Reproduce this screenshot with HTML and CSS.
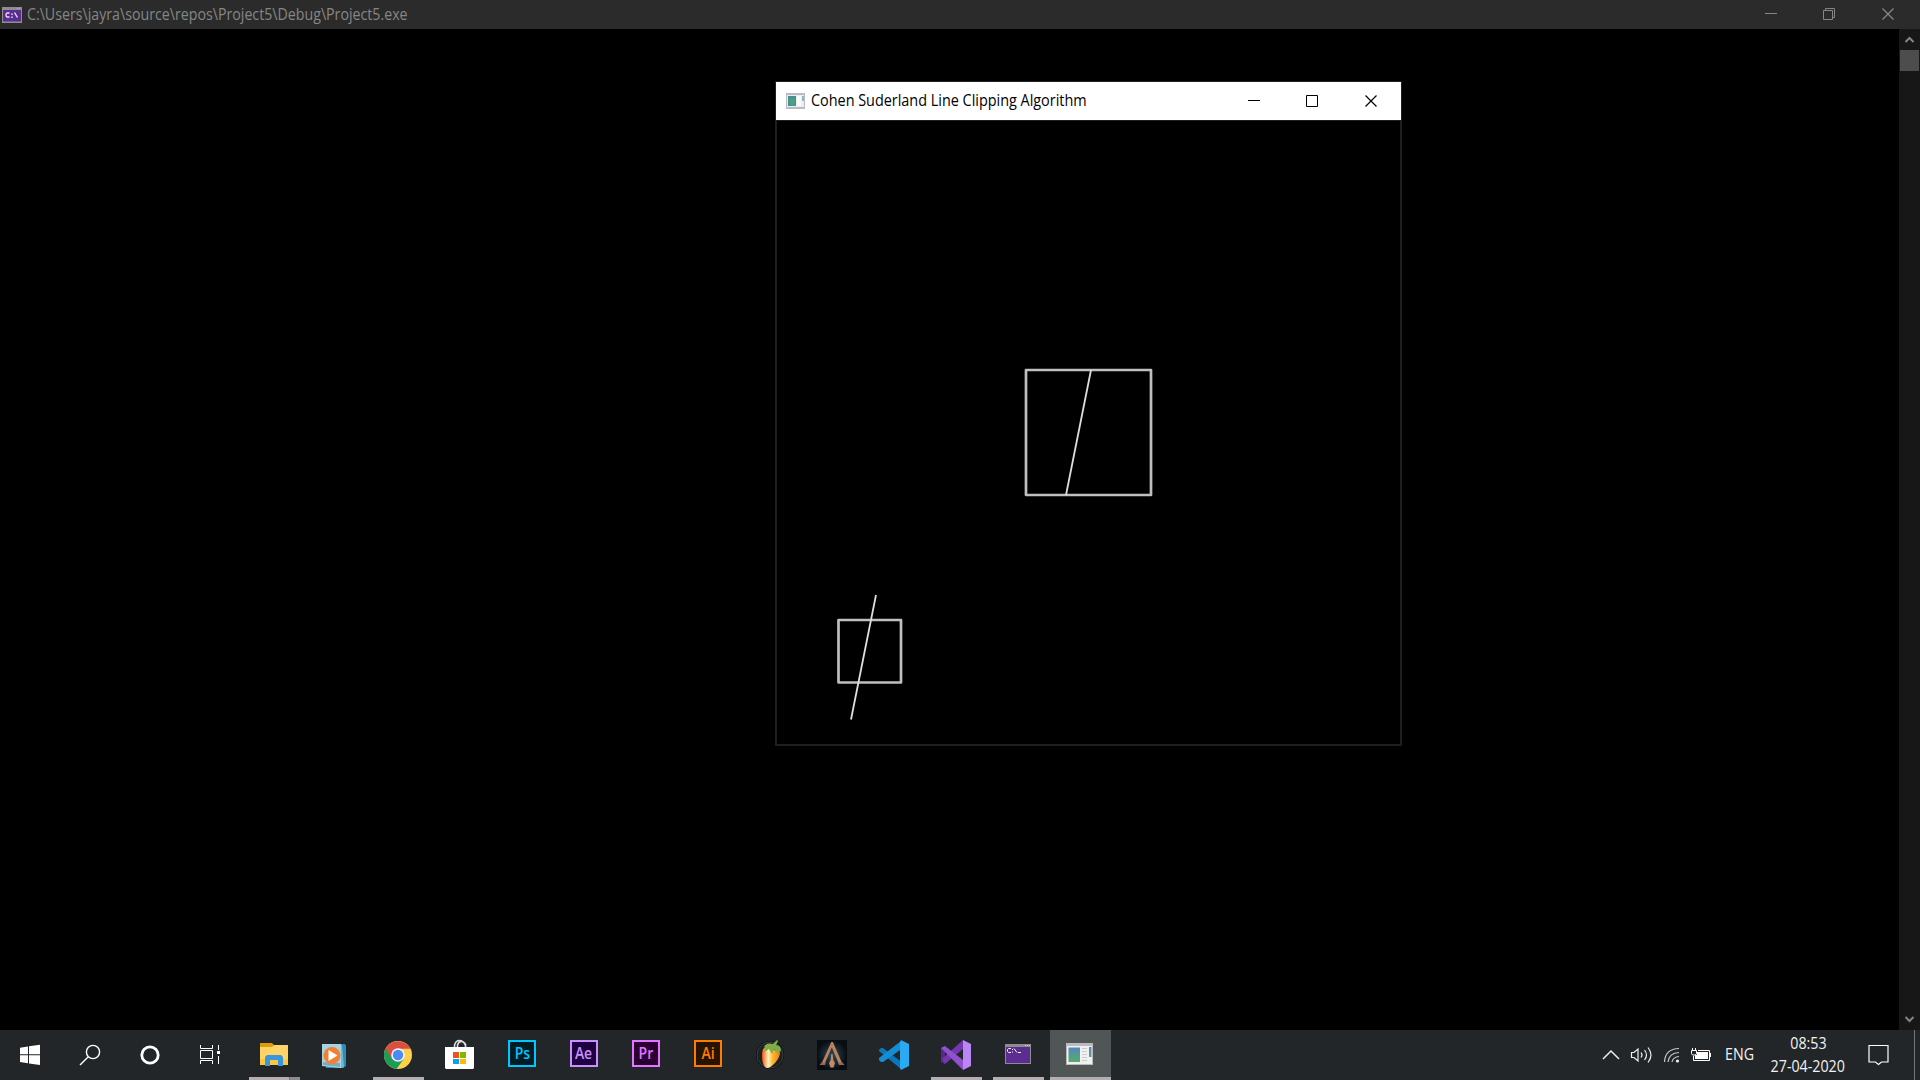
FILE: index.html
```html
<!DOCTYPE html>
<html lang="en">
<head>
<meta charset="utf-8">
<title>Desktop</title>
<link rel="stylesheet" href="styles.css">
</head>
<body>
<div class="desktop">
  <header class="console-bar">
    <svg class="console-icon" width="20" height="16" viewBox="0 0 20 16"><path fill="#8e8e92" d="M0 0h20v16H0z"/><path fill="#b5b5b9" d="M15 1h1v1h-1zM17 1h1v1h-1z"/><path fill="#5b2d91" d="M1 3h18v11.500H1z"/><path fill="none" stroke="#e8dff2" stroke-width="1.400" d="M7.500 6H5.300Q4 6 4 8t1.300 2h2.200M10 6.500v1.500M10 9.500v1.500M12.500 5.500l3 5"/></svg>
    <span class="console-title">C:\Users\jayra\source\repos\Project5\Debug\Project5.exe</span>
    <svg class="console-controls" width="149" height="29" viewBox="0 0 149 29"><g fill="none" stroke="#868686"><path d="M0 13.500h12"/><path d="M58.500 10.500h9v9h-9zM60.500 10.500v-2h9v9h-2"/><path stroke-width="1.300" d="M117.500 8.500l11 11M128.500 8.500l-11 11"/></g></svg>
  </header>
  <div class="console">
    <main class="console-area">
      <section class="window">
        <div class="window-bar">
          <svg width="19" height="16" viewBox="0 0 19 16"><path fill="#b9bcc4" d="M0 0h19v16H0z"/><path fill="#eceef1" d="M1 2h17v12H1z"/><path fill="#4c8f92" d="M2 3h8v10H2z"/><path fill="#4ba27c" d="M4 6h5v6H4z"/><path fill="#fafafa" d="M11 3h4v10h-4z"/><path fill="#8db8bd" d="M16 3h2v5h-2z"/></svg>
          <span class="window-title">Cohen Suderland Line Clipping Algorithm</span>
          <svg class="window-controls" width="153" height="38" viewBox="0 0 153 38"><g fill="none" stroke="#000"><path d="M0 18.500h12M58.500 13.500h11v11h-11z"/><path stroke-width="1.200" d="M117.500 13.500l11 11M128.500 13.500l-11 11"/></g></svg>
        </div>
        <svg class="canvas" width="625" height="625" viewBox="0 0 625 625"><path fill="none" stroke="#1e1e1e" d="M.5 0v624.500h624V0M0 .5h625"/><g fill="none" stroke="#bfbfbf" stroke-width="2.700" stroke-linejoin="round"><path d="M250 250h125v125H250zM62.500 500H125v62.500H62.500z"/><path stroke="#dedede" stroke-width="1.800" d="M315 250l-25 125M100 475L75 599.500"/></g></svg>
      </section>
    </main>
    <aside class="scrollbar">
      <svg width="21" height="21" viewBox="0 0 21 21"><path fill="none" stroke="#858585" stroke-width="2" d="M6.500 13l4-4 4 4"/></svg>
      <div class="thumb"></div>
      <svg class="down" width="21" height="21" viewBox="0 0 21 21"><path fill="none" stroke="#858585" stroke-width="2" d="M6.500 8l4 4 4-4"/></svg>
    </aside>
  </div>
  <footer class="taskbar">
    <nav class="apps">
      <div class="slot"><svg viewBox="0 0 60 50"><path fill="#fff" d="M20 17.700l8-1.200V24.300h-8zM29 16.300l11-1.500v9.500H29zM20 25.300h8v8l-8-1.200zM29 25.300h11V35l-11-1.500z"/></svg></div>
      <div class="slot"><svg viewBox="0 0 60 50"><g fill="none" stroke="#fff" stroke-width="1.400"><circle cx="33" cy="22" r="6.600"/><path d="M28.300 26.700L20 35"/></g></svg></div>
      <div class="slot"><svg viewBox="0 0 60 50"><circle cx="30" cy="25" r="8.200" fill="none" stroke="#fff" stroke-width="2.800"/></svg></div>
      <div class="slot view"><svg viewBox="0 0 63 50"><g fill="none" stroke="#fff"><path d="M20.500 15v3.500h12V15M20.500 20.500h12v8h-12zM20.500 34v-3.500h12V34M38.500 15v5M38.500 26v8"/></g><path fill="#fff" d="M37 21h3v3h-3z"/></svg></div>
      <div class="slot mid open grouped"><svg viewBox="0 0 61 50"><path fill="#dd9d08" d="M17 13h12l2 2-1 3H17z"/><path fill="#ffd466" d="M17 17h12l2-2h14v20H17z"/><path fill="#fbc642" d="M17 29h28v6H17z"/><path fill="#3995dc" d="M24 25h14l2 2v9h-5v-6h-8v6h-5v-9z"/></svg></div>
      <div class="slot wide"><svg viewBox="0 0 63 50"><path fill="#2c8db5" d="M24 14h17l1 2v20l-3 2H22z"/><path fill="#6db8d5" d="M20 15h18l2 22-2 1-18-2z"/><path fill="#a6d3e3" d="M18 14h19v24l-19-2z"/><path fill="#7fa9ba" d="M19 32l17 1v4l-17-2z"/><circle cx="28" cy="25.500" r="8.500" fill="#f1812e"/><path fill="#fff" d="M24.500 20v11l9-5.500z"/></svg></div>
      <div class="slot open"><svg viewBox="0 0 62 50"><circle cx="31" cy="25" r="14" fill="#ffd04b"/><path fill="#dc4e41" d="M31 25l-7 4-5.500-10a14 14 0 0 1 25-.2H31z"/><path fill="#1c9c5a" d="M18.500 18.500a14 14 0 0 0 11 20.400L37 28.500l-6 2.500-6.500-3z"/><circle cx="31" cy="25" r="6.800" fill="#f4f4f4"/><circle cx="31" cy="25" r="5.200" fill="#4c8bf5"/></svg></div>
      <div class="slot"><svg viewBox="0 0 62 50"><path fill="none" stroke="#ddd" stroke-width="1.600" d="M25.500 18v-2.500q1-5 5-5t6 5V18M28.500 18v-3q1-3.500 4-3.500t4.500 4"/><path fill="#fff" d="M16 17h29v21l-1 1H17l-1-1z"/><path fill="#f25022" d="M24 22h6v6h-6z"/><path fill="#7fba00" d="M31 22h6v6h-6z"/><path fill="#00a4ef" d="M24 29h6v5h-6z"/><path fill="#ffb900" d="M31 29h6v5h-6z"/></svg></div>
      <div class="slot"><div class="adobe ps"><span>Ps</span></div></div>
      <div class="slot"><div class="adobe ae"><span>Ae</span></div></div>
      <div class="slot"><div class="adobe pr"><span>Pr</span></div></div>
      <div class="slot"><div class="adobe ai"><span>Ai</span></div></div>
      <div class="slot"><svg viewBox="0 0 62 50"><defs><linearGradient id="mango" x1="0" x2="1"><stop offset="0" stop-color="#f05a10"/><stop offset=".35" stop-color="#fff1bb"/><stop offset=".6" stop-color="#fdb52e"/><stop offset="1" stop-color="#f07d14"/></linearGradient></defs><circle cx="31" cy="25" r="14" fill="#0c0f10"/><circle cx="31" cy="25" r="13" fill="#1d2123" stroke="#3a3f42"/><path fill="url(#mango)" d="M24 19q4-4 9 0l8 3c0 8-9 16-13 16-5-1-6-13-4-19z"/><path fill="#7eae45" d="M25 17q2-5 9-3l4-4 1 1-2 4q5 0 5 6l-4 2-3-4-2 5-3-5-5 3 1-4z"/></svg></div>
      <div class="slot"><svg viewBox="0 0 62 50"><defs><radialGradient id="night"><stop offset="0" stop-color="#2b4a58"/><stop offset="1" stop-color="#080d12"/></radialGradient></defs><path fill="url(#night)" d="M16 10h30v30H16z"/><path fill="#b9825c" d="M30.300 12h1.600l9.600 22h-3.600L30.800 17.500 23.500 34h-3.200z"/><path fill="#8c6b58" d="M18.500 35l2-2.500h4.500l-1 2.500zM37 32.500h4.500l2 2.500h-5.500z"/><path fill="#c28a65" d="M30.300 24h1.200l.8 6 1.700 3-1.500 4.500h-3L28 33l1.700-3z"/></svg></div>
      <div class="slot"><svg viewBox="0 0 62 50"><path fill="#0b76bd" d="M16 20l2-2h2l20 15v5l-2 1-22-18z"/><path fill="#148dd4" d="M16 30l2 2h2l20-14v-6l-2-1-22 17z"/><path fill="#29aaf3" d="M38 10l8 4v22l-8 4q-1-1-1-3V13z"/></svg></div>
      <div class="slot open"><svg viewBox="0 0 62 50"><path fill="#542b86" d="M16 18l4-2v18l-4-2z"/><path fill="#7537b0" d="M20 34l18-15v-9L17 29z"/><path fill="#9150cf" d="M16 18l4-2 18 14v10z"/><path fill="#b987f4" d="M38 10l8 4v22l-8 4z"/></svg></div>
      <div class="slot open"><svg viewBox="0 0 62 50"><path fill="#8c8c91" d="M18 14h26v20H18z"/><path fill="#d2d2d5" d="M38 15h1v1h-1zM40 15h1v1h-1zM42 15h1v1h-1z"/><path fill="#5c2d91" d="M19 17h24v16H19z"/><path fill="none" stroke="#eee" d="M24 18.500h-2.500l-1 1v2l1 1H24M25.500 19v1M25.500 21.500v1M27 18.500l3 4M31 22.500h3"/></svg></div>
      <div class="slot active"><svg viewBox="0 0 61 50"><defs><linearGradient id="pane" x2="0" y2="1"><stop stop-color="#5687bd"/><stop offset="1" stop-color="#55ac6b"/></linearGradient></defs><path fill="#b9bbbe" d="M16 13h27v22H16z"/><path fill="#f0f0f0" d="M17 16h25v18H17z"/><path fill="url(#pane)" d="M18.500 17.500H30v14.500H18.500zM39 17h2.500v10H39z"/><path stroke="#ccc" d="M32 18.500h5M32 21.500h5M32 24.500h5M32 27.500h5M32 30.500h5"/></svg></div>
    </nav>
    <div class="tray">
      <svg width="120" height="50" viewBox="0 0 120 50"><g fill="none" stroke="#eee" stroke-width="1.200"><path stroke-width="1.500" d="M4 29l8-8 8 8"/><path d="M32.500 22.500h2.500l4-3.500v12l-4-3.500h-2.500z"/><path d="M42 22.500q2 2.500 0 5M45.500 20q4 5 0 10M49 17.500q6 7.500 0 15"/><path stroke="#c4c4c4" d="M65.500 32Q66 19 80 18.500M69 32Q70 23 80 22.500M73 32Q74 27 80 26.500"/></g><circle cx="78.500" cy="31" r="1.600" fill="#eee"/><path fill="#fff" d="M98 22h11v7H96v-4h2z"/><path fill="none" stroke="#fff" d="M99 20.500h11.500v10h-16V26M93.500 18v2M96.500 18v2M92.500 20.500h5v3l-1 1.500h-3l-1-1.500z"/><path fill="#fff" d="M111 23h1v4h-1z"/></svg>
      <span class="lang">ENG</span>
      <div class="clock"><span class="time">08:53</span><span class="date">27-04-2020</span></div>
      <svg class="note" width="21" height="50" viewBox="0 0 21 50"><path fill="none" stroke="#fff" stroke-width="1.200" d="M1 15.500h19v16.500h-6.500L10.500 34.500 7.500 32H1z"/></svg>
      <i class="peek"></i>
    </div>
  </footer>
</div>
</body>
</html>
```
FILE: styles.css
```css
* { box-sizing: border-box; }
body { margin: 0; background: #000; font-family: "Open Sans", "Noto Sans", sans-serif; }
svg { display: block; flex: none; }
span { white-space: nowrap; }
.desktop { width: 1920px; height: 1080px; display: flex; flex-direction: column; overflow: hidden; }
.console-bar { height: 29px; flex: none; background: #2b2b2b; display: flex; align-items: center; padding-left: 2px; }
.console-title { margin-left: 5px; width: 440px; font-size: 16px; line-height: 26px; padding-bottom: 2px; transform: scaleX(.887); transform-origin: left; color: #868686; }
.console-controls { margin-left: auto; margin-right: 6px; }
.console { flex: 1; display: flex; min-height: 0; }
.console-area { flex: 1; padding: 52px 0 0 775px; }
.window { width: 627px; border: 1px solid #202020; }
.window-bar { height: 38px; background: #fff; display: flex; align-items: center; padding-left: 10px; }
.window-title { margin-left: 6px; width: 310px; font-size: 16px; line-height: 36px; padding-bottom: 2px; transform: scaleX(.9); transform-origin: left; color: #000; }
.window-controls { margin-left: auto; }
.canvas { background: #000; }
.scrollbar { width: 21px; background: #171717; display: flex; flex-direction: column; align-items: center; }
.thumb { width: 19px; height: 21px; background: #4d4d4d; }
.down { margin-top: auto; }
.taskbar { height: 50px; flex: none; background: #222628; display: flex; justify-content: space-between; }
.apps { display: flex; }
.slot { width: 62px; height: 50px; display: flex; justify-content: center; }
.slot svg { width: 100%; height: 50px; }
.slot:nth-child(-n+3) { width: 60px; }
.slot.view { width: 63px; }
.slot.mid { width: 61px; }
.slot.wide { width: 63px; }
.open { background: linear-gradient(#b3aeb2, #b3aeb2) 6px 47px / 51px 3px no-repeat; }
.grouped { background: linear-gradient(90deg, #b3aeb2 40px, #5c5d5f 40px, #8e8b8e 41px) 6px 47px / 51px 3px no-repeat; }
.slot.active { width: 61px; margin-left: 1px; background: #505556; border-bottom: 3px solid #b3aeb2; }
.adobe { width: 28px; height: 27px; margin-top: 10px; border: 2px solid; display: flex; justify-content: center; }
.adobe span { font-size: 17px; font-weight: 600; line-height: 22px; transform: scaleX(.82); }
.ps { color: #00c8ff; background: #001d26; }
.ae { color: #c990ff; background: #1f0040; }
.pr { color: #e276ff; background: #2a0033; }
.ai { color: #ff7c00; background: #261300; }
.tray { display: flex; color: #f2f2f2; font-size: 16px; }
.lang { margin-left: 6px; width: 31px; line-height: 49px; transform: scaleX(.89); transform-origin: left; }
.clock { width: 78px; margin-left: 13px; display: flex; flex-direction: column; align-items: center; line-height: 23px; padding-top: 2px; }
.clock span { transform: scaleX(.89); }
.note { margin-left: 21px; }
.peek { width: 1px; height: 50px; margin-left: 25px; margin-right: 5px; background: #777; }
```
